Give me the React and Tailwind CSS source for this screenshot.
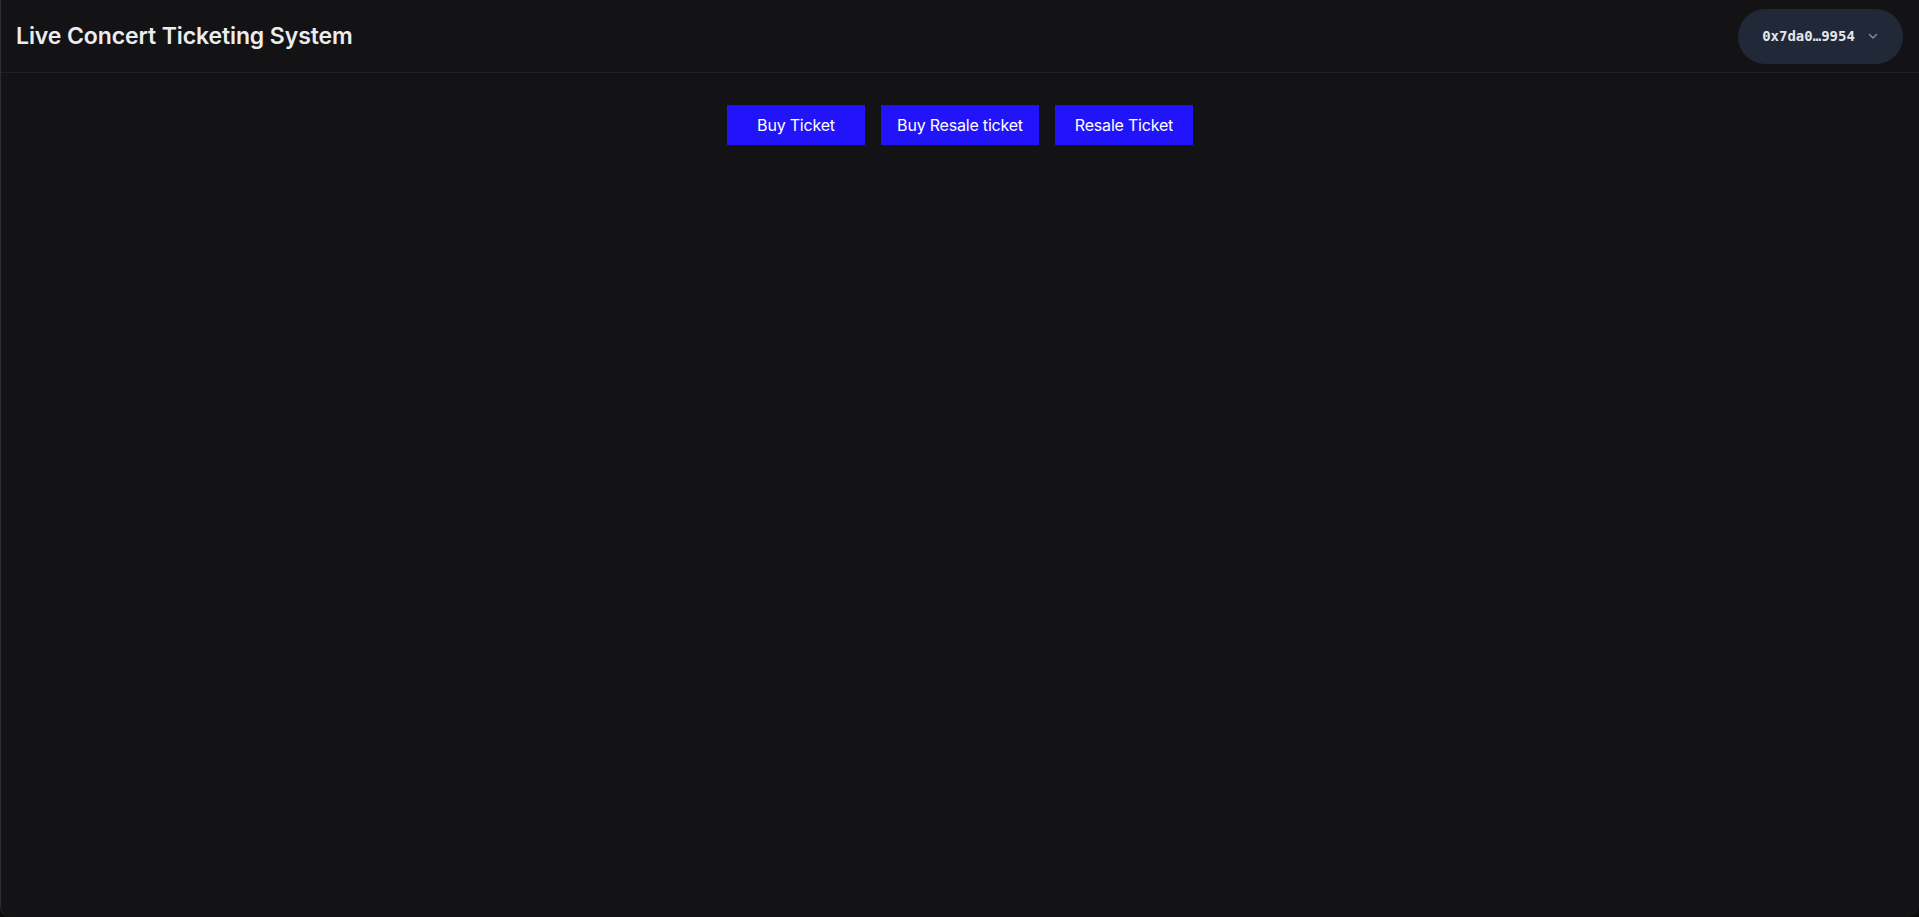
import React from 'react'

function Chevron() {
  return (
    <svg className="w-3 h-3 text-[#8b95a5]" fill="none" stroke="currentColor" viewBox="0 0 24 24">
      <path strokeLinecap="round" strokeLinejoin="round" strokeWidth={2.5} d="M5 9l7 7 7-7" />
    </svg>
  )
}

export default function App() {
  const actions = [
    { label: 'Buy Ticket', width: 'w-[138px]' },
    { label: 'Buy Resale ticket', width: 'w-[158px]' },
    { label: 'Resale Ticket', width: 'w-[138px]' },
  ]

  return (
    <div className="min-h-screen bg-[#0b0b0c]" style={{ fontFamily: 'Inter, "Noto Sans", sans-serif' }}>
      <div className="min-h-screen flex flex-col bg-[#131316] border-l border-[#2c2c31] rounded-b-[10px]">
        <header className="h-[73px] flex items-center justify-between pl-[15px] pr-4 border-b border-[#202024]">
          <h1 className="text-[23px] font-semibold text-[#ececee] tracking-[-0.1px]">Live Concert Ticketing System</h1>
          <button className="h-[55px] w-[165px] rounded-full bg-[#212838] flex items-center justify-center gap-[12px]">
            <span
              className="text-[14px] font-bold text-[#e3e7ee]"
              style={{ fontFamily: '"DejaVu Sans Mono", monospace' }}
            >
              0x7da0…9954
            </span>
            <Chevron />
          </button>
        </header>

        <main className="flex justify-center gap-4 pt-8">
          {actions.map((a) => (
            <button
              key={a.label}
              className={`${a.width} h-10 bg-[#2214fa] text-white text-[16px] tracking-[-0.2px]`}
            >
              {a.label}
            </button>
          ))}
        </main>
      </div>
    </div>
  )
}
